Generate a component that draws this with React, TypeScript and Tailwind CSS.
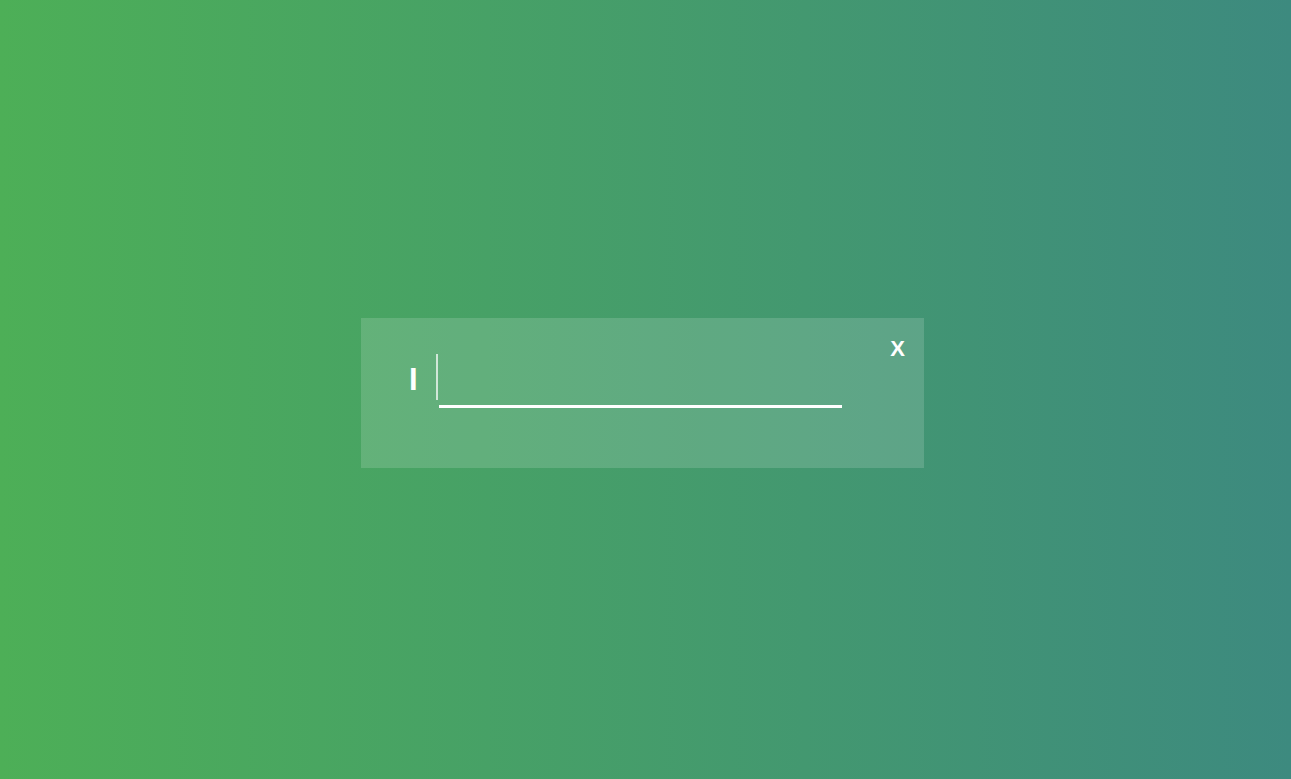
import React from "react";

const App: React.FC = () => {
  return (
    <div className="w-full h-[779px] bg-[linear-gradient(to_right,#4daf57,#3d8a7f)] font-['Liberation_Sans',Arial,sans-serif] overflow-hidden">
      {/* search overlay */}
      <div className="ml-[361px] mt-[318px] w-[563px] h-[150px] bg-white/15 relative">
        <button className="absolute top-[20px] right-[19px] text-white font-bold text-[22px] leading-none">
          X
        </button>
        <div className="flex items-start pt-[36px] pl-[48px]">
          <span className="text-white font-bold text-[31px] leading-none mt-[10px] w-[27px]">I</span>
          <div className="flex flex-col">
            <div className="w-[2px] h-[46px] bg-white/70" />
            <div className="ml-[3px] mt-[5px] w-[403px] h-[3px] bg-white" />
          </div>
        </div>
      </div>
    </div>
  );
};

export default App;
